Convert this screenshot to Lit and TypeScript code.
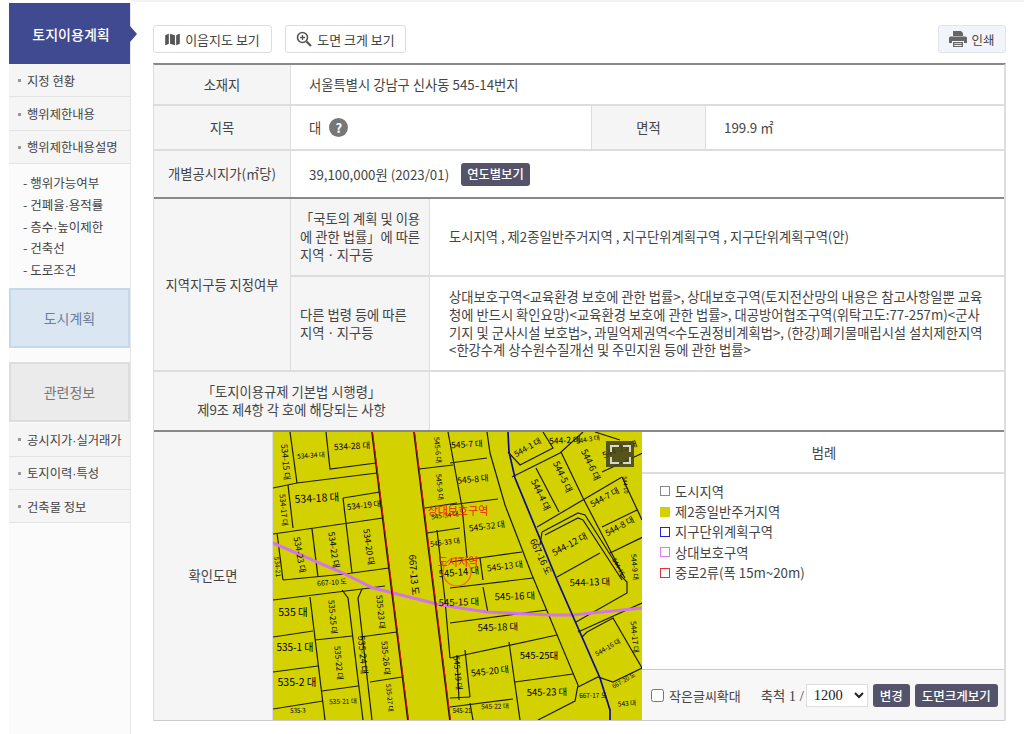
import { LitElement, html, css, svg } from "lit";
import { customElement } from "lit/decorators.js";

type L = number[];
const LINES: L[] = [
  [290,432,297,483],[273,488,297,483,377,473],[326,432,330,469,376,463],[288,485,293,528],[273,534,383,518],
  [343,498,380,492],[343,498,346,523,352,573],[312,529,318,577],[277,533,283,580],[283,580,345,574,389,568],
  [273,600,362,589,385,586],[310,597,325,720],[273,637,313,631],[315,640,352,636],[273,672,318,666],[322,691,358,686],
  [273,709,323,701],[342,590,348,598,363,720],[362,589,358,598,372,720],[360,637,397,632],[370,682,402,677],
  [419,469,453,465],[425,508,457,503],[427,533,460,528],[448,432,462,507,467,558],[450,463,487,458],[450,505,498,499],
  [487,432,490,453,505,505,532,575,578,685,575,701,538,720],[578,687,598,677,613,682,642,668],
  [450,562,522,552],[480,558,483,580],[508,452,520,465,553,448,543,432],[512,477,560,453,583,432],[561,452,583,498,623,575],
  [536,468,559,512],[537,527,622,477],[602,472,643,453],[602,527,637,510],[610,553,643,537],[622,477,642,520],[557,577,600,553],
  [542,532,578,513,585,515,625,578],[540,545,542,532],[545,535,578,518,583,520,622,580],
  [576,622,627,593,627,582,620,575],[578,632,642,603],[582,637,587,632,613,618,642,668],
  [450,623,547,610],[483,587,488,613],[450,588,533,578],[450,658,557,635],[509,642,520,720],[515,682,573,674],
  [465,650,470,697],[450,698,470,697],[450,707,513,699],[470,703,473,720],[595,432,620,440],[437,530,445,600,450,658],[457,655,459,700],
];
const RED: L[] = [[372,432,408,720],[414,432,450,720]];
const BLUE = "508,432 509,452 515,478 557,580 600,678 610,710 610,720";
const PURPLE = "273,543 343,573 373,588 437,604 460,608 487,612 550,615 573,615 642,608";
// x, y, size, rotation, text
const LABELS: [number,number,number,number,string][] = [
  [352,447,8.5,-3,"534-28 대"],[311,456,6.5,-4,"534-34 대"],[285,462,8.5,85,"534-15 대"],[283,510,7.5,85,"534-17 대"],
  [317,499,10.5,-3,"534-18 대"],[364,506,8,-6,"534-19 대"],[437,450,7,85,"545-6 대"],[439,487,7,85,"545-9 대"],
  [473,480,8.5,-5,"545-8 대"],[467,445,8.5,-3,"545-7 대"],[487,527,8.5,-7,"545-32 대"],[445,543,7,-7,"545-33 대"],
  [445,516,6.5,-7,"545-34 대"],[459,573,9.5,-5,"545-14 대"],[505,567,8.5,-7,"545-13 대"],[528,448,8,-30,"544-1 대"],
  [565,441,8.5,-3,"544-2 대"],[588,440,6.5,-10,"544-3 대"],[620,450,8.500,-20,"544-25 대"],[590,465,9,65,"544-6 대"],
  [562,477,9,65,"544-5 대"],[540,495,9,65,"544-4 대"],[605,498,8.5,-28,"544-7 대"],[620,527,8.5,-28,"544-8 대"],
  [570,545,9,-28,"544-12 대"],[540,557,9,65,"667-16 도"],[590,583,9.5,-2,"544-13 대"],[413,575,9.5,85,"667-13 도"],
  [299,555,8.5,80,"534-23 대"],[333,550,8.5,82,"534-22 대"],[368,547,8.5,82,"534-20 대"],[277,567,6.5,85,"534-21"],
  [332,583,7,-5,"667-10 도"],[293,613,10.5,0,"535 대"],[295,648,10,0,"535-1 대"],[297,683,10.5,0,"535-2 대"],
  [332,617,8,85,"535-25 대"],[338,663,8,85,"535-22 대"],[362,655,9,85,"535-24 대"],[380,612,8,85,"535-23 대"],
  [385,658,8,85,"535-26 대"],[389,698,6.5,85,"535-27 대"],[343,702,6.5,-2,"535-21 대"],[298,711,6,0,"535-3"],
  [459,603,9.5,-2,"545-15 대"],[515,597,9.5,-2,"545-16 대"],[498,628,9.5,-2,"545-18 대"],[539,656,9.5,0,"545-25대"],
  [490,672,9,-6,"545-20 대"],[457,673,8,85,"545-19 대"],[547,693,9.5,-1,"545-23 대"],[495,707,6.5,-2,"545-22 대"],
  [462,711,6,0,"545-21"],[593,696,6.5,-1,"667-17 도"],[624,681,6,-30,"667-20 도"],[627,704,6.5,-5,"543 대"],
  [608,648,6.5,-30,"544-16 대"],[634,637,7.5,85,"544-17 대"],[634,567,7,85,"544-9 대"],[625,485,5.5,85,"544-10"],[618,567,6,60,"544-15"],
];

const mapSvg = svg`<svg class="mapsvg" viewBox="273 432 369 288" width="369" height="288" xmlns="http://www.w3.org/2000/svg">
  <rect x="273" y="432" width="369" height="288" fill="#d3d100"/>
  <g fill="none" stroke="#1c1c00" stroke-width="1.2">
    ${LINES.map(l => svg`<polyline points=${l.join(" ")}/>`)}
  </g>
  <polyline points=${PURPLE} fill="none" stroke="#d274ee" stroke-width="3"/>
  <g stroke="#111" stroke-width="1.8">${RED.map(l => svg`<line x1=${l[0]} y1=${l[1]} x2=${l[2]} y2=${l[3]}/>`)}</g>
  <g stroke="#f01010" stroke-width="0.9">${RED.map(l => svg`<line x1=${l[0]+0.5} y1=${l[1]} x2=${l[2]+0.5} y2=${l[3]}/>`)}</g>
  <polyline points=${BLUE} fill="none" stroke="#0a0a9c" stroke-width="1.7"/>
  <g fill="#000" font-family="'Noto Sans CJK KR','Noto Sans',sans-serif" text-anchor="middle" dominant-baseline="middle">
    ${LABELS.map(([x,y,s,r,t]) => svg`<text x=${x} y=${y} font-size=${s} transform="rotate(${r} ${x} ${y})">${t}</text>`)}
  </g>
  <circle cx="457" cy="572" r="14" fill="none" stroke="#e8701c" stroke-width="1.3"/>
  <g fill="#f01c10" font-family="'Noto Sans CJK KR','Noto Sans',sans-serif" text-anchor="middle">
    <text x="458" y="515" font-size="11">상대보호구역</text>
    <text x="458" y="566" font-size="11">도시지역</text>
  </g>
  <rect x="606" y="441" width="28" height="26" fill="#46461e" opacity=".9"/>
  <path d="M611 452v-6h8M623 446h7v6M630 457v6h-7M619 463h-8v-6" fill="none" stroke="#d8d8cc" stroke-width="2"/>
</svg>`;

@customElement("app-root")
export class AppRoot extends LitElement {
  static styles = css`
    :host { display: flex; width: 1024px; height: 734px; overflow: hidden; background: #fff; box-sizing: border-box; padding-left: 9px;
      font-family: "Noto Sans CJK KR", "Noto Sans", sans-serif; font-size: 13.3px; color: #444; }
    * { box-sizing: border-box; }
    .dot { font-family: "Liberation Sans", sans-serif; }
    .side { width: 122px; flex: none; margin-top: 3px; background: #fbfbfb; border-right: 1px solid #e6e6e6; display: flex; flex-direction: column; }
    .head { position: relative; height: 61px; background: #3f4a90; color: #fff; font-size: 14px; font-weight: 500; display: flex; align-items: center; justify-content: center; padding-left: 3px; }
    .head::after { content: ""; position: absolute; left: 100%; top: 23px; border-left: 7px solid #3f4a90; border-top: 8px solid transparent; border-bottom: 8px solid transparent; }
    .item { height: 33.4px; background: #f5f5f5; border-bottom: 1px solid #e4e4e4; padding: 1px 0 0 9px; display: flex; align-items: center; gap: 6px; font-size: 12.3px; color: #444; white-space: nowrap; }
    .item::before { content: ""; width: 3px; height: 3px; background: #999; flex: none; }
    .subs { padding: 8px 0 7px 14px; display: flex; flex-direction: column; height: 124px; }
    .subs div { height: 21.7px; line-height: 21.7px; font-size: 12.5px; color: #444; white-space: nowrap; }
    .box { height: 60px; display: flex; align-items: center; justify-content: center; font-size: 14px; }
    .box.city { background: #dbe6f3; border: 2px solid #c4d8ee; color: #6c7f9a; margin-bottom: 14px; }
    .box.rel { background: #ebebeb; border: 2px solid #ddd; color: #777; margin-bottom: 1px; }
    .main { width: 853px; margin-left: 22px; flex: none; display: flex; flex-direction: column; }
    .topline { height: 3px; margin-left: -22px; width: 893px; border-top: 2px solid #f3f3f3; }
    .bar { height: 28px; margin-top: 22px; margin-bottom: 10px; display: flex; gap: 13px; }
    .btn { height: 28px; width: 119px; border: 1px solid #ddd; border-radius: 3px; background: #fff; display: flex; align-items: center; justify-content: center; gap: 5px; font-size: 13px; color: #444; white-space: nowrap; }
    .btn.wide { width: 121px; }
    .btn.print { margin-left: auto; width: 68px; background: #f1f5fb; border-color: #e2e6ea; gap: 4px; font-size: 12.5px; }
    .tbl { border-top: 2px solid #888; border-left: 1px solid #ddd; border-right: 2px solid #ddd; }
    .row { display: grid; border-bottom: 2px solid #ddd; }
    .row.dark { border-bottom-color: #888; }
    .r3 { grid-template-columns: 137px 1fr; }
    .r5 { grid-template-columns: 137px 301px 114px 1fr; }
    .th { background: #f5f5f5; display: flex; align-items: center; justify-content: center; text-align: center; line-height: 18px; color: #444; border-right: 1px solid #ddd; white-space: nowrap; }
    .th.left { justify-content: flex-start; text-align: left; padding-left: 9px; }
    .td { display: flex; align-items: center; padding-left: 18px; line-height: 19px; color: #444; }
    .td.bl { border-right: 1px solid #ddd; }
    .h41 { height: 41px; } .h45 { height: 45px; } .h48 { height: 48px; }
    .q { width: 19px; height: 19px; border-radius: 50%; background: #777; color: #fff; font-weight: 700; font-size: 13px; display: inline-flex; align-items: center; justify-content: center; margin-left: 8px; }
    .dk { background: #54536a; color: #fff; border-radius: 3px; font-size: 12.3px; font-weight: 500; height: 23px; padding: 0 6px; display: inline-flex; align-items: center; white-space: nowrap; }
    .dk.year { margin-left: 12px; }
    .zone { display: grid; grid-template-columns: 137px 1fr; }
    .zone > .th { border-bottom: 2px solid #ddd; }
    .zonerows .row { grid-template-columns: 139px 1fr; }
    .zonerows .td { padding: 0 19px 0 19px; line-height: 17.7px; }
    .h78 { height: 78px; } .h95 { height: 95px; } 
    .r2 { grid-template-columns: 276px 1fr; height: 60px; }
    .maprow { display: grid; grid-template-columns: 119px 369px 1fr; height: 289px; border-bottom: 1px solid #ccc; }
    .mapcell { height: 288px; overflow: hidden; }
    .mapsvg { display: block; }
    .legend { display: flex; flex-direction: column; }
    .lhead { height: 42px; border-bottom: 2px solid #ddd; display: flex; align-items: center; justify-content: center; padding-left: 2px; }
    .llist { flex: 1; padding: 7px 0 0 18px; display: flex; flex-direction: column; }
    .li { height: 20.4px; display: flex; align-items: center; gap: 5px; white-space: nowrap; }
    .sw { width: 10px; height: 10px; border: 1px solid #000; flex: none; }
    .foot { height: 51px; border-top: 1px solid #ccc; background: #f7f7f7; display: flex; align-items: center; padding-left: 9px; white-space: nowrap; }
    .foot input { margin: 0 5px 0 0; width: 13px; height: 13px; }
    .foot > span:not(.dk) { font-size: 13px; }
    .scale { margin-left: 20px; font-family: "Liberation Serif", "Noto Sans CJK KR", serif; font-size: 14.5px; }
    .scale span { font-family: "Noto Sans CJK KR", sans-serif; font-size: 13.3px; }
    select { margin: 0 5px 0 2px; width: 62px; height: 23px; font-family: "Liberation Serif", serif; font-size: 14.5px; background: #fff; border: 1px solid #ddd; color: #222; padding-left: 3px; }
    .foot .dk { height: 23px; padding: 0 7px; font-size: 12.5px; }
    .foot .dk + .dk { margin-left: 5px; }
  `;

  render() {
    const side = (a: unknown) => html`<div class="item"><span>${a}</span></div>`;
    const dot = html`<span class="dot">·</span>`;
    return html`
      <nav class="side">
        <div class="head">토지이용계획</div>
        ${side("지정 현황")}${side("행위제한내용")}${side("행위제한내용설명")}
        <div class="subs">
          <div>- 행위가능여부</div><div>- 건폐율${dot}용적률</div><div>- 층수${dot}높이제한</div><div>- 건축선</div><div>- 도로조건</div>
        </div>
        <div class="box city">도시계획</div>
        <div class="box rel">관련정보</div>
        ${side(html`공시지가${dot}실거래가`)}${side(html`토지이력${dot}특성`)}${side("건축물 정보")}
      </nav>
      <main class="main">
        <div class="topline"></div>
        <div class="bar">
          <div class="btn">
            <svg width="15" height="13" viewBox="0 0 576 512"><path fill="#555" d="M0 117v347c0 11 11 19 22 15l122-56V32L20 82C8 87 0 101 0 117zm192 306 192 64V89L192 25v398zM554 33 432 89v391l124-50c12-5 20-19 20-35V48c0-11-11-19-22-15z"/></svg>
            이음지도 보기
          </div>
          <div class="btn wide">
            <svg width="16" height="16" viewBox="0 0 16 16" fill="none" stroke="#555"><circle cx="6.5" cy="6.5" r="5" stroke-width="1.6"/><path d="M10.5 10.5 15 15" stroke-width="2.2"/><path d="M6.5 4v5M4 6.5h5" stroke-width="1.3"/></svg>
            도면 크게 보기
          </div>
          <div class="btn print">
            <svg width="18" height="16" viewBox="0 0 18 16"><path fill="#666" d="M4 0h8l2 2v3H4zM1.500 5.500h15a1.500 1.500 0 0 1 1.500 1.500v5h-3v-2H3v2H0V7a1.500 1.500 0 0 1 1.500-1.500z"/><path fill="#666" d="M4 11h10v5H4z"/><path fill="#f1f5fb" d="M5.200 12.200h7.600v.9H5.200zM5.200 14h7.600v.9H5.200z"/></svg>
            인쇄
          </div>
        </div>
        <div class="tbl">
          <div class="row r3 h41"><div class="th">소재지</div><div class="td">서울특별시 강남구 신사동 545-14번지</div></div>
          <div class="row r5 h45">
            <div class="th">지목</div><div class="td bl">대<span class="q">?</span></div>
            <div class="th">면적</div><div class="td">199.9 ㎡</div>
          </div>
          <div class="row dark r3 h48"><div class="th">개별공시지가(㎡당)</div><div class="td">39,100,000원 (2023/01)<span class="dk year">연도별보기</span></div></div>
          <div class="zone">
            <div class="th">지역지구등 지정여부</div>
            <div class="zonerows">
              <div class="row h78"><div class="th left">「국토의 계획 및 이용<br>에 관한 법률」에 따른<br>지역ㆍ지구등</div><div class="td">도시지역 , 제2종일반주거지역 , 지구단위계획구역 , 지구단위계획구역(안)</div></div>
              <div class="row h95"><div class="th left">다른 법령 등에 따른<br>지역ㆍ지구등</div><div class="td">상대보호구역&lt;교육환경 보호에 관한 법률&gt;, 상대보호구역(토지전산망의 내용은 참고사항일뿐 교육청에 반드시 확인요망)&lt;교육환경 보호에 관한 법률&gt;, 대공방어협조구역(위탁고도:77-257m)&lt;군사기지 및 군사시설 보호법&gt;, 과밀억제권역&lt;수도권정비계획법&gt;, (한강)폐기물매립시설 설치제한지역&lt;한강수계 상수원수질개선 및 주민지원 등에 관한 법률&gt;</div></div>
            </div>
          </div>
          <div class="row dark r2"><div class="th">「토지이용규제 기본법 시행령」<br>제9조 제4항 각 호에 해당되는 사항</div><div class="td"></div></div>
          <div class="maprow">
            <div class="th">확인도면</div>
            <div class="mapcell">${mapSvg}</div>
            <div class="legend">
              <div class="lhead">범례</div>
              <div class="llist">
                <div class="li"><i class="sw" style="border-color:#888"></i>도시지역</div>
                <div class="li"><i class="sw" style="background:#d3d100;border-color:#d3d100"></i>제2종일반주거지역</div>
                <div class="li"><i class="sw" style="border-color:#2222dd"></i>지구단위계획구역</div>
                <div class="li"><i class="sw" style="border-color:#d97cf5"></i>상대보호구역</div>
                <div class="li"><i class="sw" style="border-color:#e83030"></i>중로2류(폭 15m~20m)</div>
              </div>
              <div class="foot">
                <input type="checkbox"><span>작은글씨확대</span>
                <label class="scale"><span>축척</span> 1 / </label>
                <select><option>1200</option></select>
                <span class="dk">변경</span><span class="dk">도면크게보기</span>
              </div>
            </div>
          </div>
        </div>
      </main>`;
  }
}
